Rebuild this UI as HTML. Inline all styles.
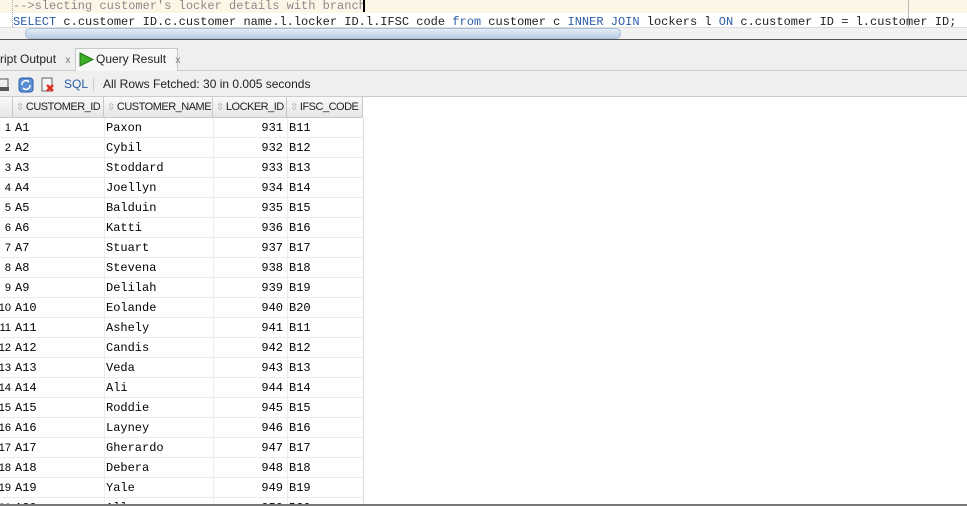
<!DOCTYPE html>
<html><head><style>
html,body{margin:0;width:967px;height:507px;overflow:hidden}
body{background:#fff;position:relative;font-family:"Liberation Sans",sans-serif}
.a{position:absolute}
.mono{font-family:"Liberation Mono",monospace;font-size:12px}
.r{position:absolute;left:0;height:20px;width:363px;border-bottom:1px solid #ececec;box-sizing:border-box}
.r span{position:absolute;top:3px}
.n{font-size:11px;right:352px;top:4px!important}
.c1{left:15px}.c2{left:106px}.c3{right:80px}.c4{left:289px}
.vl{position:absolute;top:97px;height:387px;width:1px;background:#ececec}
.h{position:absolute;top:97px;height:21px;background:linear-gradient(#fafafa,#e6e6e6);border-right:1px solid #c8c8c8;border-bottom:1px solid #c8c8c8;box-sizing:border-box;font-size:11px;letter-spacing:-0.5px;line-height:20px;color:#222;white-space:nowrap;overflow:hidden}
.h i{font-style:normal;color:#aaa;font-size:10px;margin:0 2px 0 3px}
</style></head><body>
<div class="a" style="left:0;top:0;width:967px;height:13px;background:#fdf6e6"></div>
<div class="a mono" style="left:13px;top:0;line-height:12px;color:#8a8a8a">--&gt;slecting customer's locker details with branch</div>
<div class="a" style="left:363px;top:0;width:2px;height:12px;background:#000"></div>
<div class="a" style="left:908px;top:0;width:1px;height:27px;background:#bbb"></div>
<div class="a" style="left:12px;top:0;width:1px;height:27px;border-left:1px dotted #aaa"></div>
<div class="a mono" style="left:13px;top:15px;color:#222"><span style="color:#2a5ea8">SELECT</span> c.customer ID.c.customer name.l.locker ID.l.IFSC code <span style="color:#2a5ea8">from</span> customer c <span style="color:#2a5ea8">INNER JOIN</span> lockers l <span style="color:#2a5ea8">ON</span> c.customer ID = l.customer ID;</div>
<div class="a" style="left:0;top:27px;width:967px;height:12px;background:#f2f2f2;border-top:1px solid #ddd"></div>
<div class="a" style="left:25px;top:28px;width:594px;height:9px;border-radius:5px;background:linear-gradient(#e4ecf6,#b9cde4);border:1px solid #a9bfd9"></div>
<div class="a" style="left:0;top:39px;width:967px;height:1px;background:#555"></div>
<div class="a" style="left:0;top:40px;width:967px;height:57px;background:#efefef"></div>
<div class="a" style="left:0;top:70px;width:967px;height:1px;background:#ccc"></div>
<div class="a" style="left:0;top:52px;font-size:12px;color:#222">ript Output <span style="color:#777;font-size:10px;margin-left:6px">x</span></div>
<div class="a" style="left:75px;top:48px;width:103px;height:23px;background:#f7f7f7;border:1px solid #c8c8c8;border-bottom:none;box-sizing:border-box"></div>
<svg class="a" style="left:79px;top:52px" width="16" height="15"><polygon points="1,1 14,7.5 1,14" fill="#3fae2a" stroke="#1d7a10"/></svg>
<div class="a" style="left:96px;top:52px;font-size:12px;color:#222">Query Result <span style="color:#777;font-size:10px;margin-left:6px">x</span></div>
<svg class="a" style="left:0;top:76px" width="80" height="18">
<rect x="-2" y="3" width="10" height="11" fill="#eee" stroke="#555"/><rect x="-2" y="11" width="11" height="4" fill="#555"/>
<rect x="19" y="2" width="14" height="14" rx="3" fill="#5a8fd4" stroke="#2b5fa8"/><path d="M22 9a4 4 0 0 1 7-3M30 9a4 4 0 0 1-7 3" stroke="#fff" fill="none" stroke-width="1.5"/>
<rect x="42" y="2" width="10" height="13" fill="#f4f4f4" stroke="#666"/><path d="M47 9l6 6M53 9l-6 6" stroke="#e0301e" stroke-width="2.5"/>
</svg>
<div class="a" style="left:64px;top:77px;font-size:12px;color:#2a5ea8">SQL</div>
<div class="a" style="left:93px;top:78px;width:1px;height:13px;background:#ccc"></div>
<div class="a" style="left:103px;top:77px;font-size:12px;color:#222">All Rows Fetched: 30 in 0.005 seconds</div>
<div class="a" style="left:0;top:96px;width:967px;height:1px;background:#ccc"></div>
<div class="h" style="left:0;width:13px"></div>
<div class="h" style="left:13px;width:91px"><i>⇳</i>CUSTOMER_ID</div>
<div class="h" style="left:104px;width:109px"><i>⇳</i>CUSTOMER_NAME</div>
<div class="h" style="left:213px;width:74px"><i>⇳</i>LOCKER_ID</div>
<div class="h" style="left:287px;width:76px"><i>⇳</i>IFSC_CODE</div>
<div id="rows" class="a" style="left:0;top:0;width:967px;height:504px;overflow:hidden"></div>
<div class="vl" style="left:104px;top:118px"></div><div class="vl" style="left:213px;top:118px"></div><div class="vl" style="left:287px;top:118px"></div><div class="vl" style="left:363px;top:118px;background:#ddd"></div>
<div class="a" style="left:0;top:504px;width:967px;height:3px;background:#fff;border-top:2px solid #777;box-sizing:border-box"></div>
<script>
var names=["Paxon","Cybil","Stoddard","Joellyn","Balduin","Katti","Stuart","Stevena","Delilah","Eolande","Ashely","Candis","Veda","Ali","Roddie","Layney","Gherardo","Debera","Yale","Alla"];
var h="";for(var i=0;i<20;i++){var b=11+(i%10);h+='<div class="r" style="top:'+(118+i*20)+'px"><span class="n">'+(i+1)+'</span><span class="mono c1">A'+(i+1)+'</span><span class="mono c2">'+names[i]+'</span><span class="mono c3">'+(931+i)+'</span><span class="mono c4">B'+(i==9?20:b)+'</span></div>';}
document.getElementById("rows").innerHTML=h;
</script>
</body></html>
